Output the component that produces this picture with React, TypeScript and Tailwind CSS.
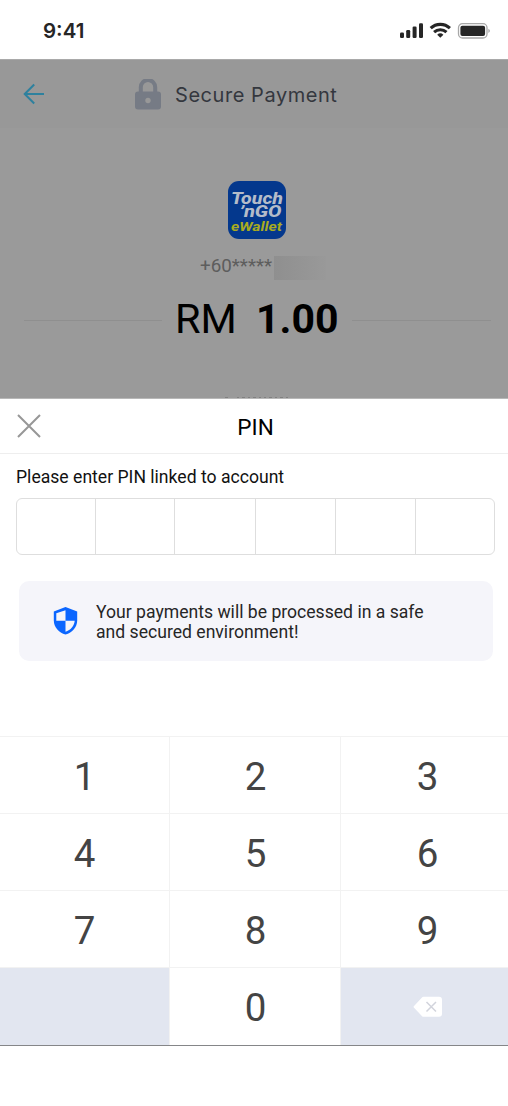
import React from "react";

const StatusBar = () => (
  <div className="flex h-[59px] shrink-0 items-start justify-between bg-white pt-[18px] pr-[17px] pl-[43px] text-[#262626]">
    <span className="font-[Inter,sans-serif] text-[20.5px] leading-[26px] font-semibold">
      9:41
    </span>
    <svg width="92" height="18" viewBox="0 0 92 18" className="mt-1">
      <g fill="#262626">
        <rect x="1" y="10.5" width="4" height="5.5" rx="1.2" />
        <rect x="7.2" y="8" width="4" height="8" rx="1.2" />
        <rect x="13.6" y="4.5" width="4" height="11.5" rx="1.2" />
        <rect x="20" y="1.3" width="4" height="14.7" rx="1.2" />
        <path d="M41.3 15.8l-3.1-3.1a4.6 4.6 0 0 1 6.2 0z" />
      </g>
      <g fill="none" stroke="#262626" strokeWidth="3.1">
        <path d="M31.7 6.2a14 14 0 0 1 19.2 0" />
        <path d="M35.1 10.1a9.2 9.2 0 0 1 12.4 0" />
      </g>
      <rect
        x="59.5"
        y="1.7"
        width="28.5"
        height="14.3"
        rx="4"
        fill="none"
        stroke="#a8a8a8"
        strokeWidth="1.3"
      />
      <rect x="61.4" y="3.7" width="24.7" height="10.3" rx="2" fill="#262626" />
      <path d="M89.4 6.7c2 .9 2 3.4 0 4.3z" fill="#a8a8a8" />
    </svg>
  </div>
);

const WalletLogo = () => (
  <svg width="58" height="58" viewBox="0 0 58 58">
    <rect width="58" height="58" rx="11" fill="#04388d" />
    <g fontFamily="Roboto, sans-serif" fontStyle="italic" fontWeight="800">
      <text x="3" y="22.5" fontSize="16.5" textLength="52" lengthAdjust="spacingAndGlyphs" fill="#b4bcc9">
        Touch
      </text>
      <text x="11.5" y="36" fontSize="16" textLength="42" lengthAdjust="spacingAndGlyphs" fill="#b4bcc9">
        ’nGO
      </text>
      <text x="3" y="50" fontSize="13" fontWeight="700" textLength="51" lengthAdjust="spacingAndGlyphs" fill="#a9ab20">
        eWallet
      </text>
    </g>
  </svg>
);

const PaymentSummary = () => (
  <div className="flex h-[339px] shrink-0 flex-col overflow-hidden border-t border-[#a9a9a9] bg-[#9a9a9a]">
    <div className="flex h-[68px] shrink-0 items-center bg-[#989898] pl-[23px]">
      <svg width="22" height="22" viewBox="0 0 22 22" fill="none" stroke="#2e819e" strokeWidth="2">
        <path d="M21 11H2M11.2 1.5L1.7 11l9.5 9.5" />
      </svg>
      <svg width="26" height="31" viewBox="0 0 26 31" className="ml-[90px]">
        <path d="M5.8 14V8.2a7.2 7.2 0 0 1 14.4 0V14" fill="none" stroke="#767b85" strokeWidth="4" />
        <rect y="12.5" width="26" height="18" rx="3" fill="#767b85" />
        <circle cx="13" cy="21.5" r="2.7" fill="#989898" />
      </svg>
      <h1 className="mt-0.5 ml-[14px] font-[Inter,sans-serif] text-[20px] leading-[26px] font-normal tracking-[0.55px] whitespace-nowrap text-[#34373e]">
        Secure Payment
      </h1>
    </div>
    <div className="mt-[53px] flex justify-center pl-[6px]">
      <WalletLogo />
    </div>
    <div className="mt-[17px] flex h-6 items-center pl-[199px]">
      <span className="-mt-[3px] w-[74px] pl-px text-[18.8px] text-[#5d5d5d]">+60*****</span>
      <span className="ml-px h-6 w-[52px] bg-linear-to-r from-[#8f8f8f] to-[#999999]" />
    </div>
    <div className="mt-[15px] flex h-[50px] items-center pr-[17px] pl-6 text-black">
      <span className="h-px w-[138px] bg-[#8f8f8f]" />
      <span className="-mt-px ml-[13px] w-[61px] text-[41.5px]">RM</span>
      <span className="-mt-px ml-[20px] w-[82px] text-[41px] font-bold">1.00</span>
      <span className="ml-auto h-px w-[139px] bg-[#8f8f8f]" />
    </div>
    {/* tops of the caption hidden behind the sheet */}
    <div className="mt-auto flex h-px shrink-0 gap-[3px] pl-[225px]">
      <span className="mr-1.5 w-[3px] bg-[#808080]" />
      {[...new Array(10)].map((_, i) => (
        <span key={i} className="w-[2.4px] bg-[#808080]" />
      ))}
    </div>
  </div>
);

const PinSheet = () => (
  <div className="border-t border-[#b8b8b8]">
    <div className="grid h-[55px] grid-cols-[60px_1fr_60px] items-center border-b border-[#eeeeee]">
      <svg width="24" height="24" viewBox="0 0 24 24" className="ml-[17px]" stroke="#979797" strokeWidth="2">
        <path d="M1 1l22 22M23 1L1 23" />
      </svg>
      <h2 className="pt-[3px] pl-[3px] text-center text-[22.5px] text-black">PIN</h2>
    </div>
    <div className="pr-[13px] pl-4">
      <p className="mt-[12px] text-[17.6px] leading-[22px] whitespace-nowrap text-[#111]">
        Please enter PIN linked to account
      </p>
      <div className="mt-[10px] grid h-[57px] grid-cols-[79px_79px_81px_80px_80px_1fr] divide-x divide-[#dedede] rounded-md border border-[#dedede]">
        {[...new Array(6)].map((_, i) => (
          <div key={i} />
        ))}
      </div>
      <div className="mt-[26px] mr-[2px] ml-[3px] flex h-[80px] items-center rounded-[10px] bg-[#f5f5fa] pl-[34px]">
        <svg width="25" height="28" viewBox="0 0 25 28">
          <path d="M12.5 0L24.2 4.6v8.8c0 6.4-4.9 12.2-11.7 14.1C5.7 25.6.8 19.8.8 13.4V4.6z" fill="#0b66ff" />
          <path d="M12.5 3.3v10.4H3.3V6.3zM12.5 13.7h9.2c-.3 5-4 9.5-9.2 11z" fill="#f5f5fa" />
        </svg>
        <p className="mt-[2px] ml-[18px] text-[17.6px] leading-[20.5px] text-[#262626]">
          Your payments will be processed in a safe
          <br />
          and secured environment!
        </p>
      </div>
    </div>
  </div>
);

const BackspaceIcon = () => (
  <svg width="30" height="22" viewBox="0 0 30 22">
    <path
      d="M10.5.8H26a3 3 0 0 1 3 3v14a3 3 0 0 1-3 3H10.5a2 2 0 0 1-1.4-.6L.8 11.6a1 1 0 0 1 0-1.3L9 1.4a2 2 0 0 1 1.5-.6z"
      fill="#fff"
    />
    <path d="M13.5 6l9.5 9.5M23 6l-9.5 9.5" stroke="#d2d4dc" strokeWidth="1.5" />
  </svg>
);

const Keypad = () => {
  const keys = ["1", "2", "3", "4", "5", "6", "7", "8", "9", "", "0", "back"];

  return (
    <div className="mt-[75px] grid h-[310px] grid-cols-[169px_170px_167px] grid-rows-[76px_76px_76px_77px] gap-px border-y border-t-[#f2f2f2] border-b-[#858688] bg-[#f2f2f2]">
      {keys.map((key, i) => (
        <button
          key={i}
          className={`flex items-center justify-center text-[38.5px] text-[#444] ${
            i % 3 === 2 ? "pl-[6px]" : i % 3 === 1 ? "pl-px" : ""
          } ${key === "" || key === "back" ? "bg-[#e2e6f0]" : key === "0" ? "bg-white pt-[3px]" : "bg-white pt-1"}`}
        >
          {key === "back" ? <BackspaceIcon /> : key}
        </button>
      ))}
    </div>
  );
};

const App = () => {
  return (
    <div className="h-[1106px] w-[508px] overflow-hidden bg-white font-[Roboto,sans-serif]">
      <StatusBar />
      <PaymentSummary />
      <PinSheet />
      <Keypad />
    </div>
  );
};

export default App;
